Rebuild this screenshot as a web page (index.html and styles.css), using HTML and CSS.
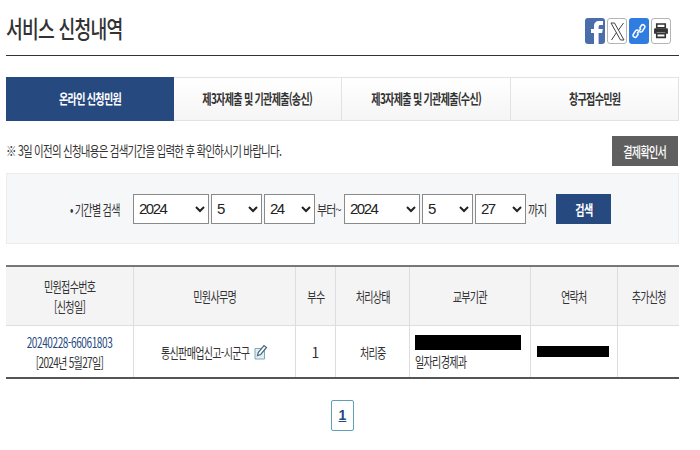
FILE: index.html
```html
<!DOCTYPE html>
<html lang="ko">
<head>
    <meta charset="UTF-8">
    <title>서비스 신청내역</title>
    <link rel="stylesheet" href="styles.css">
</head>
<body>
    <div class="container">
        <div class="page-head">
            <h1>서비스 신청내역</h1>
            <div class="share">
                <span class="share-btn fb">
                    <svg width="20" height="26" viewBox="0 0 20 26"><path d="M9 26V15H6v-4h3V8c0-3 2-5 5-5h4v4h-2.500c-1.200 0-1.900.6-1.900 2v2h4.200l-.7 4h-3.500v11z" fill="#fff"/></svg>
                </span>
                <span class="share-btn x">
                    <svg width="15" height="19" viewBox="0 0 15 19"><path d="M1 1h3.500l9.500 17h-3.500z" fill="none" stroke="#444" stroke-width="1"/><path d="M13.500 1L8.500 8M6.500 10.500L1.500 18" fill="none" stroke="#444" stroke-width="1"/></svg>
                </span>
                <span class="share-btn link">
                    <svg width="14" height="18" viewBox="0 0 14 18"><path d="M6.500 11.500l-2 3.200a2 2 0 0 1-3.300-2.100l2.300-3.700a2 2 0 0 1 3-.5" fill="none" stroke="#fff" stroke-width="1.500"/><path d="M7.500 6.500l2-3.200a2 2 0 0 1 3.300 2.100l-2.300 3.700a2 2 0 0 1-3 .5" fill="none" stroke="#fff" stroke-width="1.500"/><path d="M5 11.500l4-5" stroke="#fff" stroke-width="1.500"/></svg>
                </span>
                <span class="share-btn print">
                    <svg width="16" height="16" viewBox="0 0 15 15"><path d="M3.500 1h8v3.500h-8z" fill="none" stroke="#333" stroke-width="1.500"/><path d="M1 6a1 1 0 0 1 1-1h11a1 1 0 0 1 1 1v4h-2.500V9h-8v1H1z" fill="#333"/><path d="M3.500 10h8v3.500h-8z" fill="none" stroke="#333" stroke-width="1.500"/></svg>
                </span>
            </div>
        </div>

        <div class="tabs">
            <a class="tab active"><span class="cond">온라인 신청민원</span></a>
            <a class="tab"><span class="cond">제3자제출 및 기관제출(송신)</span></a>
            <a class="tab"><span class="cond">제3자제출 및 기관제출(수신)</span></a>
            <a class="tab"><span class="cond">창구접수민원</span></a>
        </div>

        <div class="notice-row">
            <p class="notice"><span class="cond left">※ 3일 이전의 신청내용은 검색기간을 입력한 후 확인하시기 바랍니다.</span></p>
            <button class="receipt-btn"><span class="cond">결제확인서</span></button>
        </div>

        <div class="search-box">
            <span class="search-label"><span class="cond left">• 기간별 검색</span></span>
            <select class="sel-year"><option>2024</option></select>
            <select class="sel-small"><option>5</option></select>
            <select class="sel-small"><option>24</option></select>
            <span class="search-text"><span class="cond left wide">부터~</span></span>
            <select class="sel-year"><option>2024</option></select>
            <select class="sel-small"><option>5</option></select>
            <select class="sel-small"><option>27</option></select>
            <span class="search-text"><span class="cond left wide">까지</span></span>
            <button class="search-btn"><span class="cond">검색</span></button>
        </div>

        <table class="list">
            <thead>
                <tr>
                    <th class="col-no"><span class="cond">민원접수번호<br>[신청일]</span></th>
                    <th class="col-name"><span class="cond">민원사무명</span></th>
                    <th class="col-count"><span class="cond">부수</span></th>
                    <th class="col-state"><span class="cond">처리상태</span></th>
                    <th class="col-org"><span class="cond">교부기관</span></th>
                    <th class="col-tel"><span class="cond">연락처</span></th>
                    <th class="col-add"><span class="cond">추가신청</span></th>
                </tr>
            </thead>
            <tbody>
                <tr>
                    <td><span class="cond"><a class="receipt-no">20240228-66061803</a><br>[2024년 5월27일]</span></td>
                    <td class="name-cell">
                        <span class="name-wrap">
                            <span class="name-text"><span class="cond left">통신판매업신고-시군구</span></span>
                            <svg width="14" height="17" viewBox="0 0 14 17"><path d="M1 5.500h9.500V16H1z" fill="#e3eff4" stroke="#7fa8ba"/><path d="M3.500 12.500l.7-3L10 2.500l2.500 2-5.800 7z" fill="#fff" stroke="#46687a" stroke-width="1.200"/></svg>
                        </span>
                    </td>
                    <td>1</td>
                    <td><span class="cond">처리중</span></td>
                    <td class="org-cell"><span class="mask mask-org"></span><span class="cond left">일자리경제과</span></td>
                    <td><span class="mask mask-tel"></span></td>
                    <td></td>
                </tr>
            </tbody>
        </table>

        <div class="paging">
            <a class="page-num">1</a>
        </div>
    </div>
</body>
</html>
```

FILE: styles.css
```css
body {
    margin: 0;
    background: #fff;
    color: #333;
    font-family: "Noto Sans CJK KR", "Noto Sans", sans-serif;
}
.container {
    width: 673px;
    margin-left: 6px;
}
/* 원본 글자가 가로로 좁아서 폭만 줄임 */
.cond {
    display: inline-block;
    white-space: nowrap;
    letter-spacing: -1px;
    transform: scaleX(.72);
}
.cond.left {
    transform-origin: left;
}
.cond.wide {
    transform: scaleX(.78);
}
.page-head {
    display: flex;
    justify-content: space-between;
    height: 55px;
    border-bottom: 1px solid #333;
}
h1 {
    margin: 0;
    padding-top: 11px;
    font-size: 24px;
    line-height: 34px;
    font-weight: 500;
    letter-spacing: -1px;
    white-space: nowrap;
    transform: scaleX(.76);
    transform-origin: left;
}
.share {
    display: flex;
    gap: 2px;
    padding: 18px 8px 0 0;
}
.share-btn {
    display: flex;
    align-items: center;
    justify-content: center;
    width: 20px;
    height: 26px;
    border-radius: 3px;
    box-sizing: border-box;
    overflow: hidden;
}
.fb {
    background: #4a6ea9;
}
.x, .print {
    border: 1px solid #b5b5b5;
    background: #fff;
}
.link {
    background: #2f7de1;
}
.tabs {
    display: flex;
    height: 44px;
    margin-top: 21px;
}
.tab {
    flex: 1;
    display: flex;
    align-items: center;
    justify-content: center;
    box-sizing: border-box;
    padding-bottom: 2px;
    border: 1px solid #e2e2e2;
    border-left: 0;
    background: linear-gradient(#fff, #f5f5f5);
    font-size: 14px;
    font-weight: 700;
}
.tab.active {
    border: 0;
    background: #264a7f;
    color: #fff;
}
.notice-row {
    display: flex;
    justify-content: space-between;
    align-items: center;
    height: 30px;
    margin-top: 15px;
}
.notice {
    margin: 0;
    padding-bottom: 2px;
    font-size: 14px;
}
.notice .cond {
    transform: scaleX(.75);
}
.receipt-btn {
    width: 66px;
    height: 30px;
    margin-right: 1px;
    padding: 0;
    border: 0;
    background: #5f5f5f;
    color: #fff;
    font: 500 14px "Noto Sans CJK KR", sans-serif;
}
.search-box {
    display: flex;
    align-items: center;
    height: 71px;
    margin-top: 7px;
    padding-left: 63px;
    box-sizing: border-box;
    border: 1px solid #ececec;
    background: #f6f7f9;
}
.search-label {
    width: 63px;
    font-size: 14px;
}
select {
    height: 30px;
    margin-right: 2px;
    padding-left: 1px;
    border: 1px solid #8a8a8a;
    border-radius: 0;
    background: #fff;
    color: #222;
    font: 15px "Liberation Sans", sans-serif;
    letter-spacing: -1.5px;
}
.sel-year {
    width: 76px;
}
.sel-small {
    width: 51px;
}
.search-text {
    width: 27px;
    font-size: 14px;
}
.search-btn {
    width: 55px;
    height: 30px;
    margin-left: 1px;
    padding: 0;
    border: 0;
    background: #264a7f;
    color: #fff;
    font: 700 14px "Noto Sans CJK KR", sans-serif;
}
.list {
    width: 673px;
    margin-top: 21px;
    border-collapse: collapse;
    table-layout: fixed;
    border-top: 2px solid #777;
    border-bottom: 2px solid #555;
    font-size: 14px;
}
.list th, .list td {
    padding: 0;
    border-left: 1px solid #ddd;
    text-align: center;
    font-weight: 400;
    line-height: 20px;
}
.list th:first-child, .list td:first-child {
    border-left: 0;
}
.list th {
    height: 58px;
    background: #f4f4f4;
    border-bottom: 1px solid #ddd;
}
.list td {
    height: 51px;
}
.col-no { width: 127px; }
.col-name { width: 161px; }
.col-count { width: 39px; }
.col-state { width: 73px; }
.col-org { width: 120px; }
.col-tel { width: 86px; }
.receipt-no {
    color: #264a7f;
    letter-spacing: -.6px;
}
.name-wrap {
    display: flex;
    align-items: center;
    justify-content: center;
    gap: 2px;
}
.name-text {
    width: 91px;
    text-align: left;
}
.list .org-cell {
    padding-left: 5px;
    text-align: left;
    line-height: 18px;
}
.mask {
    display: block;
    background: #000;
}
.mask-org {
    width: 106px;
    height: 15px;
    margin: 2px 0;
}
.mask-tel {
    width: 72px;
    height: 11px;
    margin-left: 6px;
}
.paging {
    display: flex;
    justify-content: center;
    margin-top: 21px;
}
.page-num {
    width: 23px;
    height: 31px;
    box-sizing: border-box;
    border: 1px solid #5f9fb8;
    border-radius: 2px;
    color: #264a7f;
    font: 700 14px/29px "Liberation Sans", sans-serif;
    text-align: center;
    text-decoration: underline;
}
```
